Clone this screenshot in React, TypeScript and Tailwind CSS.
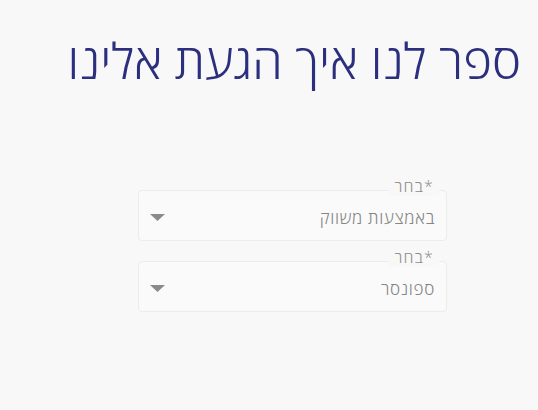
export default function App() {
    const fields = [
        { label: '*בחר', value: 'באמצעות משווק' },
        { label: '*בחר', value: 'ספונסר' },
    ];

    return (
        <div
            dir="rtl"
            className="min-h-[410px] w-[538px] bg-[#f8f8f8] font-['Open_Sans',sans-serif]"
        >
            {/* Title */}
            <h1 className="pr-[17px] pt-[28px] text-[49px] font-extralight leading-[64px] text-[#2b2f7d]">
                ספר לנו איך הגעת אלינו
            </h1>

            {/* Form */}
            <div className="mr-[91px] mt-[98px] flex w-[309px] flex-col gap-[20px]">
                {fields.map((field, i) => (
                    <div
                        key={i}
                        className="relative h-[51px] rounded-[4px] border border-[#ececec] bg-[#fafafa]"
                    >
                        <span className="absolute -top-[15px] right-[7px] bg-[#f8f8f8] px-[5px] text-[16px] font-light leading-[20px] tracking-[1.2px] text-[#8c8c8c]">
                            {field.label}
                        </span>
                        <div className="flex h-full items-center justify-between pr-[11px] pl-[11px] pt-[4px]">
                            <span className="text-[17px] font-light tracking-[0.7px] text-[#858585]">{field.value}</span>
                            <svg width="15" height="7" viewBox="0 0 15 7" className="-mt-[1px]">
                                <path d="M0 0 H15 L7.5 7 Z" fill="#8a8a8a" />
                            </svg>
                        </div>
                    </div>
                ))}
            </div>
        </div>
    );
}
